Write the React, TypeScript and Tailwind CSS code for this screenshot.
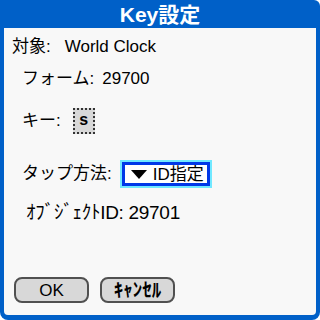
import React from "react";

const font = { fontFamily: '"Liberation Sans", "Noto Sans CJK JP", sans-serif' };

export default function App() {
  return (
    <div className="w-[320px] h-[320px] bg-[#0060c8] rounded-tr-[6px] rounded-b-[8px] flex flex-col text-black" style={font}>
      <div className="h-[28px] flex items-center justify-center text-white font-bold text-[21px] leading-none">Key設定</div>
      <div className="flex-1 mx-[4px] mb-[5px] bg-[#f8f8f8] rounded-b-[4px] flex flex-col px-[8px] pb-[12px] text-[17px]">
        <div className="mt-[9px] h-[20px] flex items-center">
          <span>対象:</span>
          <span className="ml-[14px]">World Clock</span>
        </div>
        <div className="mt-[12px] h-[20px] flex items-center pl-[10px]">
          <span>フォーム:</span>
          <span className="ml-[8px]">29700</span>
        </div>
        <div className="mt-[19px] h-[26px] flex items-center pl-[10px]">
          <span>キー:</span>
          <div className="ml-[12px] w-[22px] h-[26px] border-2 border-dotted border-[#333] bg-[#d8d8d8] flex items-center justify-center text-[16px] font-bold leading-none pb-[2px]">s</div>
        </div>
        <div className="mt-[27px] h-[26px] flex items-center pl-[10px]">
          <span>タップ方法:</span>
          <div className="ml-[10px] w-[88px] h-[24px] border-[3px] border-[#0038e8] shadow-[0_0_0_2px_#70e8ff] bg-white flex items-center pl-[6px] leading-none">
            <svg width="16" height="9" viewBox="0 0 16 9"><path d="M0 0H16L8 9Z" fill="#000" /></svg>
            <span className="ml-[6px]">ID指定</span>
          </div>
        </div>
        <div className="mt-[16px] h-[20px] flex items-center pl-[14px] text-[19px] tracking-[-0.3px]">
          <span>ｵﾌﾞｼﾞｪｸﾄID: 29701</span>
        </div>
        <div className="mt-auto flex gap-[11px] pl-[2px]">
          <button className="w-[75px] h-[26px] rounded-[8px] border-2 border-[#505050] bg-[#d8d8d8] text-[17px] leading-none flex items-center justify-center">OK</button>
          <button className="w-[75px] h-[26px] rounded-[8px] border-2 border-[#505050] bg-[#d8d8d8] text-[19px] font-bold leading-none flex items-center justify-center">ｷｬﾝｾﾙ</button>
        </div>
      </div>
    </div>
  );
}
